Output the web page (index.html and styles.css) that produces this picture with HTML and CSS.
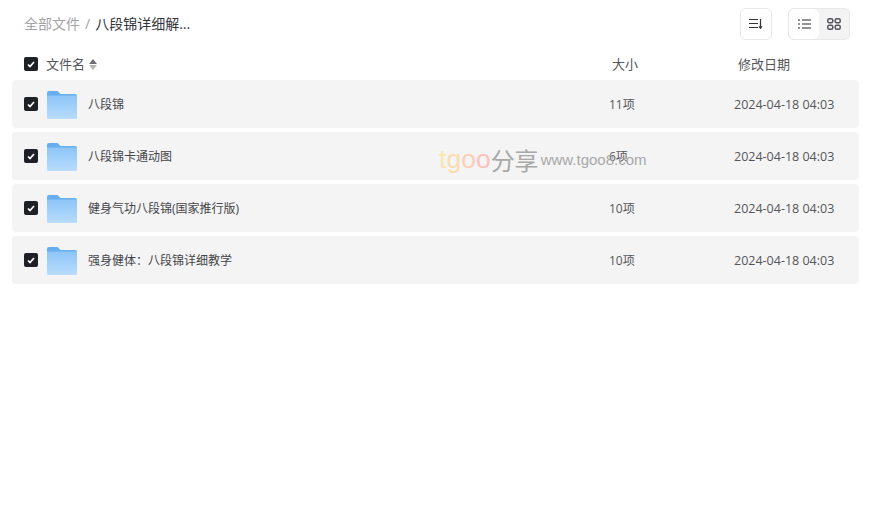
FILE: index.html
```html
<!DOCTYPE html>
<html lang="zh-CN">
<head>
    <meta charset="UTF-8">
    <title>八段锦详细解...</title>
    <link rel="stylesheet" href="styles.css">
</head>
<body>
    <div class="container">
        <div class="toolbar">
            <div class="crumbs">
                <span class="crumb-root">全部文件</span>
                <span class="crumb-sep">/</span>
                <span class="crumb-current">八段锦详细解...</span>
            </div>
            <div class="tools">
                <div class="icon-btn">
                    <svg width="14" height="12" viewBox="0 0 14 12" fill="none" stroke="#33343a" stroke-width="1.2">
                        <path d="M0 1.500h9M0 5.500h9M0 9.500h9"/>
                        <path d="M11.500 1v9"/>
                        <path d="M10 8.500l1.500 2.500 1.500-2.500z" fill="#33343a" stroke-width="0.6"/>
                    </svg>
                </div>
                <div class="switch">
                    <div class="switch-item active">
                        <svg width="13" height="10" viewBox="0 0 13 10" fill="none" stroke="#26272d" stroke-width="1.2">
                            <path d="M0 1h2M4 1h9M0 5h2M4 5h9M0 9h2M4 9h9"/>
                        </svg>
                    </div>
                    <div class="switch-item">
                        <svg width="14" height="12" viewBox="0 0 14 12" fill="none" stroke="#55565c" stroke-width="1.500">
                            <rect x="0.800" y="0.800" width="5" height="4" rx="1.500"/>
                            <rect x="8.200" y="0.800" width="5" height="4" rx="1.500"/>
                            <rect x="0.800" y="7.200" width="5" height="4" rx="1.500"/>
                            <rect x="8.200" y="7.200" width="5" height="4" rx="1.500"/>
                        </svg>
                    </div>
                </div>
            </div>
        </div>

        <div class="list-head">
            <div class="col-name">
                <span class="check"><svg width="8" height="7" viewBox="0 0 8 7" fill="none" stroke="#fff" stroke-width="1.700"><path d="M1 3.500l2 2 4-4.500"/></svg></span>
                <span class="head-label">文件名</span>
                <span class="sort"><i class="sort-up"></i><i class="sort-down"></i></span>
            </div>
            <div class="col-size">大小</div>
            <div class="col-date">修改日期</div>
        </div>

        <div class="row">
            <div class="col-name">
                <span class="check"><svg width="8" height="7" viewBox="0 0 8 7" fill="none" stroke="#fff" stroke-width="1.700"><path d="M1 3.500l2 2 4-4.500"/></svg></span>
                <svg class="folder" width="30" height="28" viewBox="0 0 30 28"><use href="#folder"/></svg>
                <span class="name">八段锦</span>
            </div>
            <div class="col-size">11项</div>
            <div class="col-date">2024-04-18 04:03</div>
        </div>
        <div class="row">
            <div class="col-name">
                <span class="check"><svg width="8" height="7" viewBox="0 0 8 7" fill="none" stroke="#fff" stroke-width="1.700"><path d="M1 3.500l2 2 4-4.500"/></svg></span>
                <svg class="folder" width="30" height="28" viewBox="0 0 30 28"><use href="#folder"/></svg>
                <span class="name">八段锦卡通动图</span>
            </div>
            <div class="col-size">6项</div>
            <div class="col-date">2024-04-18 04:03</div>
        </div>
        <div class="row">
            <div class="col-name">
                <span class="check"><svg width="8" height="7" viewBox="0 0 8 7" fill="none" stroke="#fff" stroke-width="1.700"><path d="M1 3.500l2 2 4-4.500"/></svg></span>
                <svg class="folder" width="30" height="28" viewBox="0 0 30 28"><use href="#folder"/></svg>
                <span class="name">健身气功八段锦(国家推行版)</span>
            </div>
            <div class="col-size">10项</div>
            <div class="col-date">2024-04-18 04:03</div>
        </div>
        <div class="row">
            <div class="col-name">
                <span class="check"><svg width="8" height="7" viewBox="0 0 8 7" fill="none" stroke="#fff" stroke-width="1.700"><path d="M1 3.500l2 2 4-4.500"/></svg></span>
                <svg class="folder" width="30" height="28" viewBox="0 0 30 28"><use href="#folder"/></svg>
                <span class="name">强身健体：八段锦详细教学</span>
            </div>
            <div class="col-size">10项</div>
            <div class="col-date">2024-04-18 04:03</div>
        </div>
    </div>

    <div class="watermark">
        <span class="wm-t">t</span><span class="wm-g">g</span><span class="wm-o1">o</span><span class="wm-o2">o</span><span class="wm-cn">分享</span>
        <span class="wm-url">www.tgoo8.com</span>
    </div>

    <svg class="defs" width="0" height="0">
        <defs>
            <linearGradient id="folder-fill" x1="0" y1="0" x2="0" y2="1">
                <stop offset="0" stop-color="#8cc5f8"/>
                <stop offset="1" stop-color="#b9dcfc"/>
            </linearGradient>
            <g id="folder">
                <path d="M0 2a2 2 0 0 1 2-2h8.500l3 3H28a2 2 0 0 1 2 2v6H0z" fill="#66aeee"/>
                <path d="M0 4.500h30v22a1.500 1.500 0 0 1-1.500 1.500h-27A1.500 1.500 0 0 1 0 26.500z" fill="url(#folder-fill)"/>
            </g>
        </defs>
    </svg>
</body>
</html>
```

FILE: styles.css
```css
* {
    box-sizing: border-box;
}
body {
    margin: 0;
    background: #fff;
    font-family: "Open Sans", "Noto Sans CJK SC", sans-serif;
    font-size: 12px;
    color: #33343a;
    position: relative;
    height: 514px;
    overflow: hidden;
}
.container {
    width: 859px;
    padding: 8px 0 0 12px;
}
.toolbar {
    display: flex;
    justify-content: space-between;
    align-items: center;
    height: 32px;
    padding: 0 9px 0 12px;
}
.crumbs {
    display: flex;
    align-items: center;
    gap: 5px;
    font-size: 14px;
    padding-bottom: 2px;
}
.crumb-root {
    color: #a3a3a6;
}
.crumb-sep {
    color: #a3a3a6;
}
.crumb-current {
    color: #33343a;
}
.tools {
    display: flex;
    gap: 16px;
}
.icon-btn {
    width: 32px;
    height: 32px;
    border: 1px solid #e8e8ea;
    border-radius: 6px;
    display: flex;
    align-items: center;
    justify-content: center;
}
.switch {
    display: flex;
    width: 62px;
    height: 32px;
    background: #f3f3f4;
    border: 1px solid #e8e8ea;
    border-radius: 6px;
    overflow: hidden;
}
.switch-item {
    flex: 1;
    display: flex;
    align-items: center;
    justify-content: center;
}
.switch-item.active {
    background: #fff;
    border-radius: 6px;
}
.list-head {
    display: flex;
    align-items: center;
    height: 40px;
    padding-top: 8px;
    font-size: 13px;
    color: #55565a;
}
.list-head .col-size,
.list-head .col-date,
.head-label {
    padding-bottom: 2px;
}
.row {
    display: flex;
    align-items: center;
    height: 48px;
    margin-bottom: 4px;
    background: #f4f4f4;
    border-radius: 4px;
    color: #55565a;
}
.col-name {
    display: flex;
    align-items: center;
    width: 597px;
    padding-left: 12px;
}
.col-size {
    width: 125px;
}
.row .col-date {
    font-size: 12.500px;
}
.list-head .col-size {
    padding-left: 3px;
}
.list-head .col-date {
    padding-left: 4px;
}
.check {
    width: 14px;
    height: 14px;
    background: #1f2026;
    border-radius: 2px;
    display: flex;
    align-items: center;
    justify-content: center;
    flex-shrink: 0;
}
.head-label {
    margin-left: 8px;
}
.sort {
    display: flex;
    flex-direction: column;
    gap: 1px;
    margin-left: 4px;
}
.sort i {
    width: 0;
    height: 0;
    border-left: 4px solid transparent;
    border-right: 4px solid transparent;
}
.sort-up {
    border-bottom: 5px solid #6d6e72;
}
.sort-down {
    border-top: 5px solid #b5b5b7;
}
.folder {
    margin: 2px 0 0 9px;
    flex-shrink: 0;
}
.name {
    margin-left: 11px;
    color: #44454a;
}
.defs {
    position: absolute;
}
.watermark {
    position: absolute;
    left: 439px;
    top: 144px;
    white-space: nowrap;
    display: flex;
    align-items: flex-start;
    color: #a8a8a8;
    pointer-events: none;
}
.wm-t, .wm-g, .wm-o1, .wm-o2 {
    font-size: 26.500px;
    font-family: "Liberation Sans", sans-serif;
}
.wm-t {
    color: #fbe6ad;
}
.wm-g {
    color: #fbdcb0;
}
.wm-o1 {
    color: #fccfb8;
}
.wm-o2 {
    color: #fcc2ba;
}
.wm-cn {
    font-size: 24px;
    margin-top: -2px;
    font-family: "Noto Sans CJK SC", sans-serif;
}
.wm-url {
    font-size: 15px;
    margin: 7px 0 0 2px;
    font-family: "Liberation Sans", sans-serif;
}
```
